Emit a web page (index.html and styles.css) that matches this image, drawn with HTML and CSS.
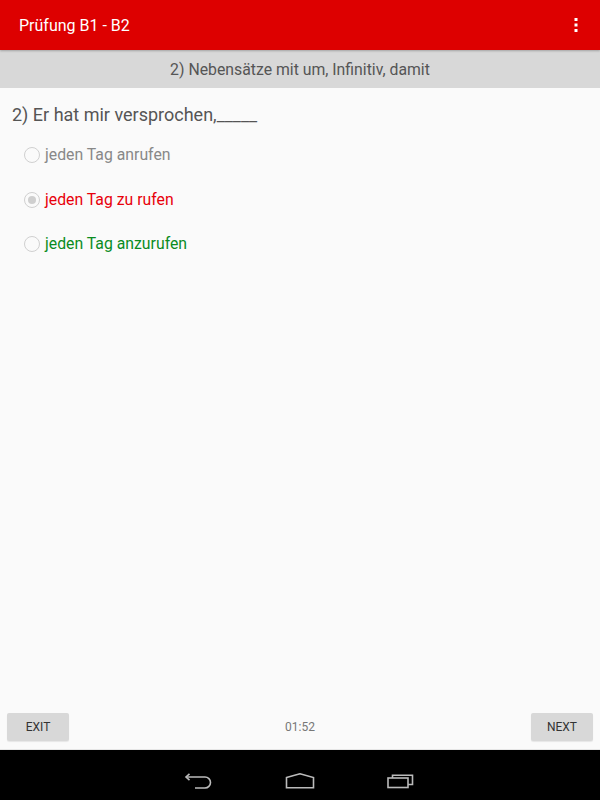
FILE: index.html
```html
<!DOCTYPE html>
<html>
<head>
<meta charset="utf-8">
<link rel="stylesheet" href="styles.css">
</head>
<body>
<div class="screen">
  <header class="appbar">
    <span class="title">Prüfung B1 - B2</span>
    <svg class="menu" width="4" height="14" viewBox="0 0 4 14"><rect x="0.5" y="0" width="3" height="3" fill="#fff"/><rect x="0.5" y="5.5" width="3" height="3" fill="#fff"/><rect x="0.5" y="11" width="3" height="3" fill="#fff"/></svg>
  </header>
  <div class="subheader">2) Nebensätze mit um, Infinitiv, damit</div>
  <main class="content">
    <div class="question">2) Er hat mir versprochen,_____</div>
    <ul class="options">
      <li class="option neutral"><span class="radio"></span>jeden Tag anrufen</li>
      <li class="option wrong"><span class="radio checked"></span>jeden Tag zu rufen</li>
      <li class="option right"><span class="radio"></span>jeden Tag anzurufen</li>
    </ul>
  </main>
  <footer class="actions">
    <button class="btn">EXIT</button>
    <span class="timer">01:52</span>
    <button class="btn">NEXT</button>
  </footer>
  <nav class="navbar">
    <svg width="30" height="16" viewBox="0 0 30 16"><path d="M2 4 H21 A5.5 5.5 0 0 1 21 15 H11" fill="none" stroke="#bbb" stroke-width="1.6"/><path d="M5.5 0.8 L2 4 L5.5 7.2" fill="none" stroke="#bbb" stroke-width="1.6"/></svg>
    <svg width="30" height="16" viewBox="0 0 30 16"><path d="M1.5 4.5 L15 0.8 L28.5 4.5 V14.8 H1.5 Z" fill="none" stroke="#bbb" stroke-width="1.6"/></svg>
    <svg width="30" height="16" viewBox="0 0 30 16"><rect x="2" y="5" width="20" height="9.5" fill="none" stroke="#bbb" stroke-width="1.6"/><path d="M6.5 5 V2.2 H26.5 V11.5 H22" fill="none" stroke="#bbb" stroke-width="1.6"/></svg>
  </nav>
</div>
</body>
</html>
```
FILE: styles.css
```css
html, body {
  margin: 0;
  padding: 0;
}
body {
  font-family: Roboto, "Noto Sans", "Liberation Sans", sans-serif;
  background: #fafafa;
}
.screen {
  width: 600px;
  height: 800px;
  display: flex;
  flex-direction: column;
  background: #fafafa;
}
.appbar {
  height: 50px;
  flex: none;
  background: #dd0000;
  display: flex;
  align-items: center;
  justify-content: space-between;
  padding: 0 22px 0 19px;
  box-shadow: 0 1px 2px rgba(0,0,0,0.25);
  position: relative;
  z-index: 1;
}
.title {
  color: #fff;
  font-size: 16px;
}
.menu {
  display: block;
}
.subheader {
  height: 38px;
  flex: none;
  background: #d8d8d8;
  color: #555;
  font-size: 15.8px;
  display: flex;
  align-items: center;
  justify-content: center;
}
.content {
  flex: 1;
  padding: 15px 12px 0 12px;
}
.question {
  font-size: 18px;
  color: #555;
  line-height: 24px;
}
.options {
  list-style: none;
  margin: 18px 0 0 0;
  padding: 0 0 0 12px;
  display: flex;
  flex-direction: column;
  gap: 24.5px;
}
.option {
  display: flex;
  align-items: center;
  font-size: 15.8px;
  line-height: 20px;
}
.option.neutral { color: #888; }
.option.wrong { color: #e8000b; }
.option.right { color: #0a8c1f; }
.radio {
  width: 14px;
  height: 14px;
  border: 1.5px solid #d0d0d0;
  border-radius: 50%;
  margin-right: 5px;
  box-sizing: content-box;
  display: flex;
  align-items: center;
  justify-content: center;
  flex: none;
}
.radio.checked::after {
  content: "";
  width: 8px;
  height: 8px;
  border-radius: 50%;
  background: #cfcfcf;
}
.actions {
  height: 50px;
  flex: none;
  display: flex;
  align-items: center;
  justify-content: space-between;
  padding: 4px 7px 0 7px;
  border-bottom: 1px solid #e6e6e6;
  box-sizing: border-box;
}
.btn {
  width: 62px;
  height: 28px;
  background: #d8d8d8;
  border: none;
  border-radius: 2px;
  font-family: Roboto, "Noto Sans", "Liberation Sans", sans-serif;
  font-size: 12px;
  color: #333;
  padding: 0;
  box-shadow: 0 1px 1px rgba(0,0,0,0.08);
}
.timer {
  font-size: 12px;
  color: #777;
}
.navbar {
  height: 50px;
  flex: none;
  background: #000;
  display: flex;
  align-items: center;
  justify-content: center;
  gap: 71px;
  padding-top: 12px;
  box-sizing: border-box;
}
.navbar svg {
  display: block;
}
```
